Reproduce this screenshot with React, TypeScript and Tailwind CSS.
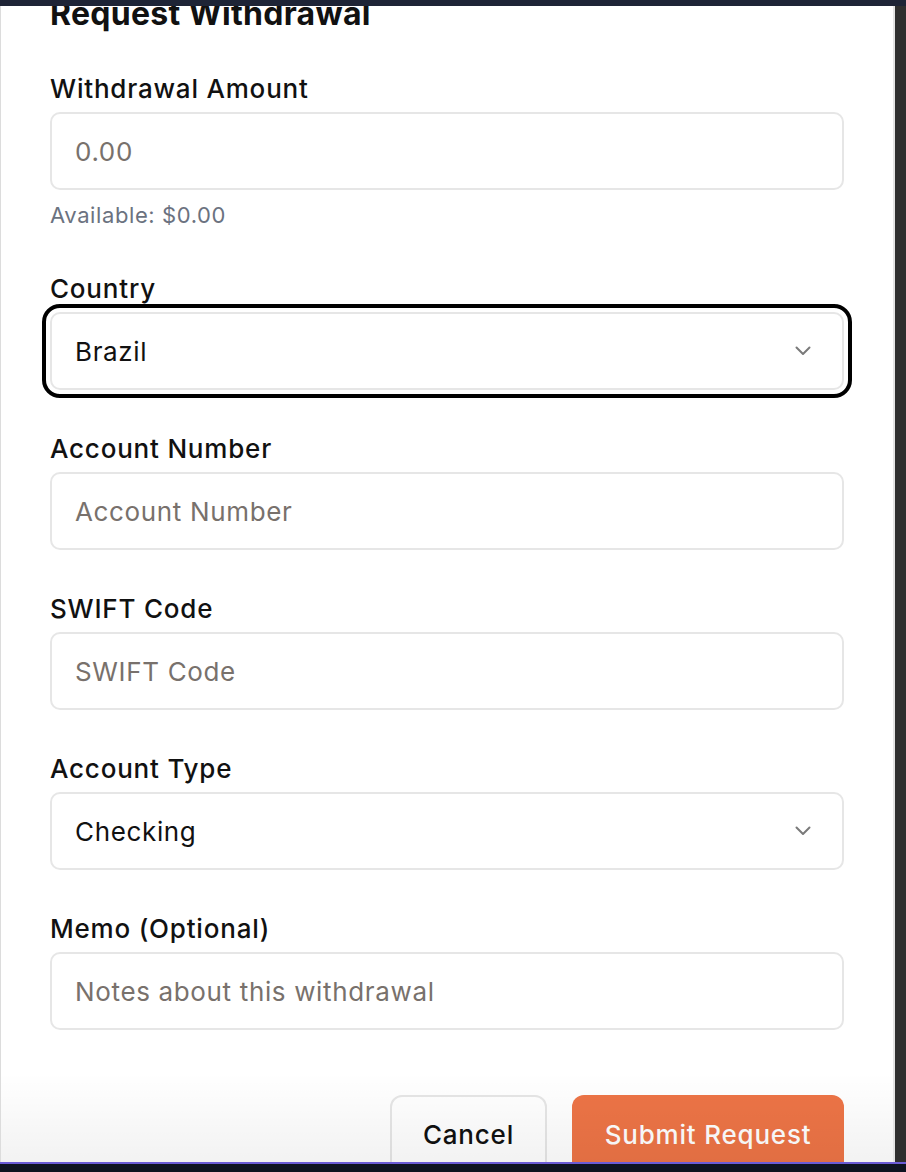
import React from 'react';

function Chevron() {
  return (
    <svg width="16" height="10" viewBox="0 0 16 10" fill="none" className="shrink-0">
      <path d="M1.5 1.5 L8 8 L14.5 1.5" stroke="#7a7a7a" strokeWidth="2" strokeLinecap="round" strokeLinejoin="round" />
    </svg>
  );
}

function Field({ label, children }: { label: string; children: React.ReactNode }) {
  return (
    <div className="flex flex-col">
      <label className="text-[26px] leading-[32px] font-medium tracking-[0.8px] text-[#111111] mb-[7px]">{label}</label>
      {children}
    </div>
  );
}

function TextBox({ placeholder }: { placeholder: string }) {
  return (
    <div className="h-[78px] rounded-[10px] border-2 border-[#e6e6e6] bg-white px-[23px] flex items-center">
      <span className="text-[26px] tracking-[0.65px] text-[#78716c]">{placeholder}</span>
    </div>
  );
}

function SelectBox({ value, focused }: { value: string; focused?: boolean }) {
  return (
    <div
      className={
        focused
          ? 'h-[78px] rounded-[10px] border-2 border-[#e6e6e6] bg-white pl-[23px] pr-[31px] flex items-center justify-between outline-4 outline-offset-4 outline-black'
          : 'h-[78px] rounded-[10px] border-2 border-[#e6e6e6] bg-white pl-[23px] pr-[31px] flex items-center justify-between'
      }
    >
      <span className="text-[26px] tracking-[0.65px] text-[#111111]">{value}</span>
      <Chevron />
    </div>
  );
}

export default function App() {
  return (
    <div className="w-[906px] h-[1172px] flex flex-col overflow-hidden bg-[#0e1321] font-['Inter',sans-serif]">
      <div className="h-[6px] shrink-0 bg-[#1e2436]" />
      <div className="flex flex-1 min-h-0">
        <div className="relative flex-1 min-w-0 overflow-hidden bg-white border-l border-[#dcdcdc] border-r-2 border-r-[#e4e4e4]">
          <div className="px-[49px] flex flex-col">
            <h2 className="mt-[-10px] text-[32px] leading-[36px] font-bold text-[#111111] tracking-[0.3px]">Request Withdrawal</h2>

            <div className="mt-[41px] flex flex-col gap-[43px]">
              <Field label="Withdrawal Amount">
                <TextBox placeholder="0.00" />
                <p className="mt-[11px] text-[22px] leading-[29px] tracking-[0.6px] text-[#6b7280]">Available: $0.00</p>
              </Field>
              <Field label="Country">
                <SelectBox value="Brazil" focused />
              </Field>
              <Field label="Account Number">
                <TextBox placeholder="Account Number" />
              </Field>
              <Field label="SWIFT Code">
                <TextBox placeholder="SWIFT Code" />
              </Field>
              <Field label="Account Type">
                <SelectBox value="Checking" />
              </Field>
              <Field label="Memo (Optional)">
                <TextBox placeholder="Notes about this withdrawal" />
              </Field>
            </div>

            <div className="mt-[65px] flex justify-end gap-[25px]">
              <button className="h-[78px] w-[157px] rounded-[12px] border-2 border-[#e6e6e6] bg-white text-[26px] tracking-[0.8px] font-medium text-[#111111]">
                Cancel
              </button>
              <button className="h-[78px] w-[272px] rounded-[12px] bg-[#ed7446] text-[26px] tracking-[0.8px] font-medium text-white">
                Submit Request
              </button>
            </div>
          </div>
          <div className="pointer-events-none absolute inset-x-0 bottom-0 h-[90px] bg-gradient-to-b from-transparent to-black/[0.05]" />
        </div>
        <div className="w-[11px] shrink-0 bg-[#2f2f2f]" />
      </div>
      <div className="h-[2px] shrink-0 bg-[#6b5bd6]" />
      <div className="h-[8px] shrink-0 bg-[#0e1321]" />
    </div>
  );
}
